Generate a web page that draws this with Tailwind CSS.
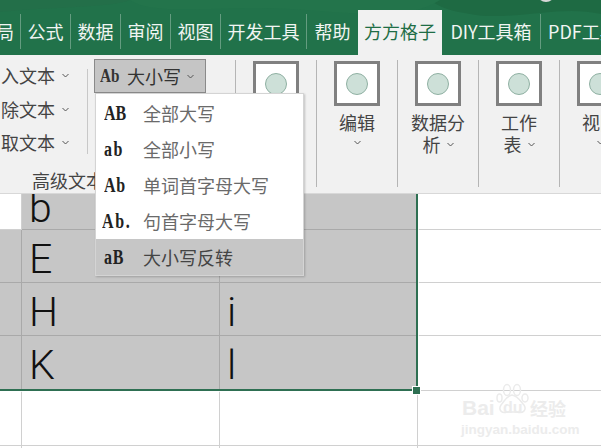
<!DOCTYPE html>
<html><head><meta charset="utf-8">
<script src="https://cdn.jsdelivr.net/npm/@tailwindcss/browser@4"></script>
</head>
<body class="m-0">
<div class="relative w-[601px] h-[448px] overflow-hidden bg-white font-['Noto_Sans_CJK_SC','Noto_Sans',sans-serif] text-[#444]">

  <!-- Tab bar -->
  <div class="relative h-[55px] bg-[#21724a] overflow-hidden">
    <svg class="absolute inset-0" width="601" height="55" viewBox="0 0 601 55">
      <path d="M0 0H601V14C560 4 510 22 470 14C430 8 440 0 420 0Z" fill="#1e6a43"/>
      <path d="M130 0C150 14 200 8 260 8C330 8 400 26 440 0Z" fill="#23744b"/>
      <path d="M0 0H130C110 8 60 6 0 12Z" fill="#236f49"/>
      <circle cx="546" cy="-7" r="9" fill="#d8d8d8"/>
    </svg>
    <div class="absolute left-0 top-[10px] w-[700px] h-[45px] flex text-[#f1f5f2] text-[18px] whitespace-nowrap">
      <div class="w-[20px] shrink-0 flex justify-end pr-[6px] my-[4px] leading-[35px] h-[35px]"><span>局</span></div>
      <div class="w-[50px] shrink-0 text-center border-l border-white/30 my-[4px] leading-[35px] h-[35px]">公式</div>
      <div class="w-[50px] shrink-0 text-center border-l border-white/30 my-[4px] leading-[35px] h-[35px]">数据</div>
      <div class="w-[50px] shrink-0 text-center border-l border-white/30 my-[4px] leading-[35px] h-[35px]">审阅</div>
      <div class="w-[50px] shrink-0 text-center border-l border-white/30 my-[4px] leading-[35px] h-[35px]">视图</div>
      <div class="w-[86px] shrink-0 text-center border-l border-white/30 my-[4px] leading-[35px] h-[35px]">开发工具</div>
      <div class="w-[52px] shrink-0 text-center border-l border-white/30 my-[4px] leading-[35px] h-[35px]">帮助</div>
      <div class="w-[84px] shrink-0 text-center bg-[#f1f1f1] text-[#1f6e46] leading-[43px]">方方格子</div>
      <div class="w-[98px] shrink-0 text-center my-[4px] leading-[35px] h-[35px]">DIY工具箱</div>
      <div class="shrink-0 pl-[7px] border-l border-white/30 my-[4px] leading-[35px] h-[35px]">PDF工具</div>
    </div>
  </div>

  <!-- Ribbon -->
  <div class="relative h-[139px] bg-[#f1f1f1] border-b border-[#d8d8d8]">
    <div class="absolute left-[0px] top-[4px] w-[87px] flex flex-col text-[18px] leading-[33.5px] text-[#444]">
      <div class="flex justify-end items-center gap-[7px] pr-[18px] whitespace-nowrap"><span>入文本</span><svg class="shrink-0" width="7" height="5" viewBox="0 0 7 5"><path d="M.5 1 3.500 4 6.500 1" fill="none" stroke="#555"/></svg></div>
      <div class="flex justify-end items-center gap-[7px] pr-[18px] whitespace-nowrap"><span>除文本</span><svg class="shrink-0" width="7" height="5" viewBox="0 0 7 5"><path d="M.5 1 3.500 4 6.500 1" fill="none" stroke="#555"/></svg></div>
      <div class="flex justify-end items-center gap-[7px] pr-[18px] whitespace-nowrap"><span>取文本</span><svg class="shrink-0" width="7" height="5" viewBox="0 0 7 5"><path d="M.5 1 3.500 4 6.500 1" fill="none" stroke="#555"/></svg></div>
    </div>
    <div class="absolute left-[32px] top-[112px] w-[63px] overflow-hidden text-[18px] leading-[26px] whitespace-nowrap text-[#444]">高级文本</div>

    <div class="absolute left-[87px] top-[14px] h-[85px] w-px bg-[#c8c8c8]"></div>

    <!-- Ab button -->
    <div class="absolute left-[94px] top-[4px] w-[112px] h-[34px] bg-[#c5c5c5] border border-[#8a8a8a] flex items-center pl-[5px] text-[#333] text-[18px]">
      <span class="w-[27px] font-['Liberation_Serif',serif] font-bold text-[19px] scale-x-[.8] origin-left">Ab</span><span>大小写</span>
      <svg class="ml-[6px]" width="7" height="5" viewBox="0 0 7 5"><path d="M.5 1 3.500 4 6.500 1" fill="none" stroke="#555"/></svg>
    </div>

    <!-- Separators -->
    <div class="absolute left-[235px] top-[5px] h-[127px] w-px bg-[#b5b5b5]"></div>
    <div class="absolute left-[316px] top-[5px] h-[127px] w-px bg-[#b5b5b5]"></div>
    <div class="absolute left-[397px] top-[5px] h-[127px] w-px bg-[#b5b5b5]"></div>
    <div class="absolute left-[478px] top-[5px] h-[127px] w-px bg-[#b5b5b5]"></div>
    <div class="absolute left-[559px] top-[5px] h-[127px] w-px bg-[#b5b5b5]"></div>

    <!-- Icon buttons -->
    <div class="absolute left-[253px] top-[6px] w-[46px] h-[45px] bg-white border-[3px] border-[#808080] flex items-center justify-center"><div class="w-[22px] h-[22px] rounded-full bg-[#cde0d8] border border-[#8fb0a2]"></div></div>

    <div class="absolute left-[317px] top-[6px] w-[80px] flex flex-col items-center text-[18px] leading-[22px] text-[#444]">
      <div class="w-[46px] h-[45px] bg-white border-[3px] border-[#808080] flex items-center justify-center"><div class="w-[22px] h-[22px] rounded-full bg-[#cde0d8] border border-[#8fb0a2]"></div></div>
      <div class="mt-[5px]">编辑</div>
      <svg class="mt-[7px]" width="7" height="5" viewBox="0 0 7 5"><path d="M.5 1 3.500 4 6.500 1" fill="none" stroke="#555"/></svg>
    </div>
    <div class="absolute left-[398px] top-[6px] w-[80px] flex flex-col items-center text-[18px] leading-[22px] text-[#444]">
      <div class="w-[46px] h-[45px] bg-white border-[3px] border-[#808080] flex items-center justify-center"><div class="w-[22px] h-[22px] rounded-full bg-[#cde0d8] border border-[#8fb0a2]"></div></div>
      <div class="mt-[5px]">数据分</div>
      <div class="flex items-center gap-[6px]"><span>析</span><svg width="7" height="5" viewBox="0 0 7 5"><path d="M.5 1 3.500 4 6.500 1" fill="none" stroke="#555"/></svg></div>
    </div>
    <div class="absolute left-[479px] top-[6px] w-[80px] flex flex-col items-center text-[18px] leading-[22px] text-[#444]">
      <div class="w-[46px] h-[45px] bg-white border-[3px] border-[#808080] flex items-center justify-center"><div class="w-[22px] h-[22px] rounded-full bg-[#cde0d8] border border-[#8fb0a2]"></div></div>
      <div class="mt-[5px]">工作</div>
      <div class="flex items-center gap-[6px]"><span>表</span><svg width="7" height="5" viewBox="0 0 7 5"><path d="M.5 1 3.500 4 6.500 1" fill="none" stroke="#555"/></svg></div>
    </div>
    <div class="absolute left-[560px] top-[6px] w-[80px] flex flex-col items-center text-[18px] leading-[22px] text-[#444]">
      <div class="w-[46px] h-[45px] bg-white border-[3px] border-[#808080] flex items-center justify-center"><div class="w-[22px] h-[22px] rounded-full bg-[#cde0d8] border border-[#8fb0a2]"></div></div>
      <div class="mt-[5px]">视图</div>
      <svg class="mt-[7px]" width="7" height="5" viewBox="0 0 7 5"><path d="M.5 1 3.500 4 6.500 1" fill="none" stroke="#555"/></svg>
    </div>
  </div>

  <!-- Sheet -->
  <div class="relative overflow-hidden h-[254px] grid grid-cols-[22px_198px_198px_1fr] grid-rows-[36px_53px_53px_55px_55px_20px] text-[41px] font-['Roboto',sans-serif] font-light text-[#111]">
    <div class="border-r border-b border-[#d0d0d0]"></div>
    <div class="bg-[#c6c6c6] border-r border-b border-[#a9a9a9] pl-[7px] leading-[28px] overflow-hidden">b</div>
    <div class="bg-[#c6c6c6] border-r border-b border-[#a9a9a9]"></div>
    <div class="border-b border-[#d0d0d0]"></div>

    <div class="bg-[#c6c6c6] border-r border-b border-[#a9a9a9]"></div>
    <div class="bg-[#c6c6c6] border-r border-b border-[#a9a9a9] pl-[7px] leading-[58px]">E</div>
    <div class="bg-[#c6c6c6] border-r border-b border-[#a9a9a9]"></div>
    <div class="border-b border-[#d0d0d0]"></div>

    <div class="bg-[#c6c6c6] border-r border-b border-[#a9a9a9]"></div>
    <div class="bg-[#c6c6c6] border-r border-b border-[#a9a9a9] pl-[7px] leading-[58px]">H</div>
    <div class="bg-[#c6c6c6] border-r border-b border-[#a9a9a9] pl-[7px] leading-[58px]">i</div>
    <div class="border-b border-[#d0d0d0]"></div>

    <div class="bg-[#c6c6c6] border-r border-b border-[#a9a9a9]"></div>
    <div class="bg-[#c6c6c6] border-r border-b border-[#a9a9a9] pl-[7px] leading-[58px]">K</div>
    <div class="bg-[#c6c6c6] border-r border-b border-[#a9a9a9] pl-[7px] leading-[58px]">l</div>
    <div class="border-b border-[#d0d0d0]"></div>

    <div class="border-r border-b border-[#d0d0d0]"></div>
    <div class="border-r border-b border-[#d0d0d0]"></div>
    <div class="border-r border-b border-[#d0d0d0]"></div>
    <div class="border-b border-[#d0d0d0]"></div>

    <div class="border-r border-[#d0d0d0]"></div>
    <div class="border-r border-[#d0d0d0]"></div>
    <div class="border-r border-[#d0d0d0]"></div>
    <div></div>

    <!-- selection outline -->
    <div class="absolute left-[-4px] top-[-4px] w-[422px] h-[201px] border-2 border-[#2e6f52] outline outline-1 outline-white/80 pointer-events-none"></div>
    <div class="absolute left-[413px] top-[193px] w-[7px] h-[7px] bg-[#2e6f52] outline outline-1 outline-white"></div>
  </div>

  <!-- Dropdown -->
  <div class="absolute left-[95px] top-[93px] w-[209px] h-[183px] bg-white border border-[#d4d4d4] shadow-[1px_1px_2px_rgba(0,0,0,0.2)] pt-[1px] text-[18px] text-[#6a6a6a]">
    <div class="flex h-[36px] items-center pl-[8px]"><span class="w-[39px] font-['Liberation_Serif',serif] font-bold text-[20px] scale-x-[.8] origin-left text-[#222]">AB</span><span>全部大写</span></div>
    <div class="flex h-[36px] items-center pl-[8px]"><span class="w-[39px] font-['Liberation_Serif',serif] font-bold text-[20px] scale-x-[.8] origin-left tracking-[2px] text-[#222]">ab</span><span>全部小写</span></div>
    <div class="flex h-[36px] items-center pl-[8px]"><span class="w-[39px] font-['Liberation_Serif',serif] font-bold text-[20px] scale-x-[.8] origin-left tracking-[1px] text-[#222]">Ab</span><span>单词首字母大写</span></div>
    <div class="flex h-[36px] items-center pl-[6px]"><span class="w-[41px] font-['Liberation_Serif',serif] font-bold text-[20px] scale-x-[.8] origin-left tracking-[2px] text-[#222]">Ab.</span><span>句首字母大写</span></div>
    <div class="flex h-[36px] items-center pl-[8px] bg-[#c6c6c6] text-[#444]"><span class="w-[39px] font-['Liberation_Serif',serif] font-bold text-[20px] scale-x-[.8] origin-left tracking-[1px] text-[#222]">aB</span><span>大小写反转</span></div>
  </div>

  <!-- Watermark -->
  <div class="absolute left-[460px] top-[383px] w-[130px] h-[62px] text-[#ececec] font-['Liberation_Sans',sans-serif] font-bold">
    <svg class="absolute left-[36px] top-0" width="34" height="34" viewBox="0 0 34 34" fill="none" stroke="#ebebeb" stroke-width="1.500"><ellipse cx="11" cy="7" rx="3.500" ry="5.500"/><ellipse cx="21" cy="7" rx="3.500" ry="5.500"/><ellipse cx="29" cy="15" rx="3" ry="4"/><ellipse cx="3.500" cy="15" rx="2.500" ry="4"/><path d="M16 12C10 13 8 19 5 22C2 27 6 31 11 29H21C27 31 31 27 28 22C25 19 22 13 16 12Z"/></svg>
    <div class="absolute left-[2px] top-[13px] text-[21px] leading-[24px] whitespace-nowrap">Bai</div>
    <div class="absolute left-[43px] top-[15px] text-[16px] leading-[20px] whitespace-nowrap">du</div>
    <div class="absolute left-[70px] top-[15px] text-[18px] leading-[20px] whitespace-nowrap font-['Noto_Sans_CJK_SC',sans-serif]">经验</div>
    <div class="absolute left-[1px] top-[38px] text-[13.500px] leading-[18px] whitespace-nowrap">jingyan.baidu.com</div>
  </div>
</div>
</body></html>
